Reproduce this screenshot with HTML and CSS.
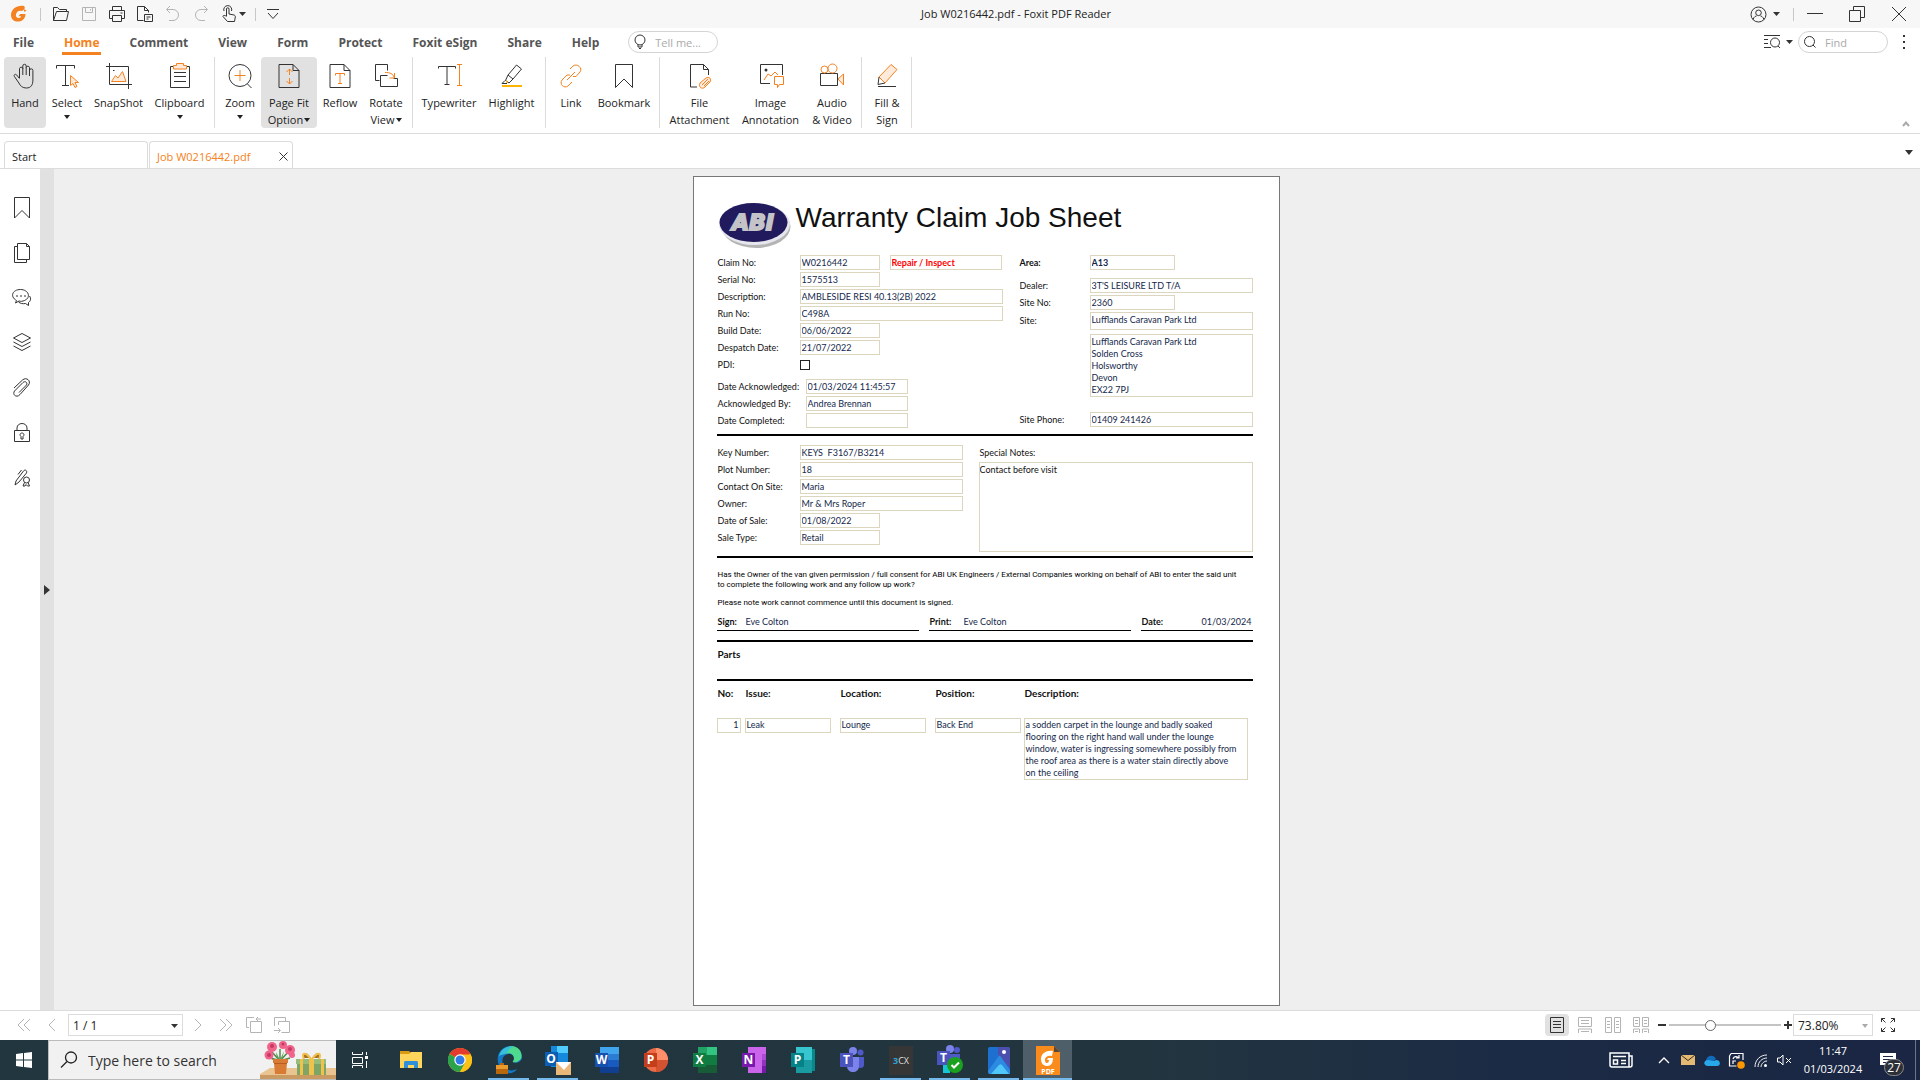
FILE: index.html
```html
<!DOCTYPE html>
<html lang="en">
<head>
  <meta charset="UTF-8">
  <meta name="viewport" content="width=device-width, initial-scale=1.0">
  <title>Job W0216442.pdf - Foxit PDF Reader</title>
  <link rel="stylesheet" href="styles.css">
</head>
<body>
  <!-- title bar -->
  <header class="titlebar">
    <div class="quick">
      <span class="slot app-logo"><svg width="18" height="18" viewBox="0 0 18 18"><path d="M14 1C7 0 1 4 1 10c0 5 4 7 8 6.500 4-.5 6.500-3.500 6.500-7.500H10L8.700 11.200h2.500c-.5 1.300-1.500 1.800-2.500 1.800C6.500 13 5.500 11 6 9c.7-3 4-4 6-3l2-1.500C15 3.500 15 2 14 1z" fill="#f58220" stroke="none"/><path d="M13.500 4l3 1.500-2 1.500z" fill="#f58220" stroke="none"/></svg></span>
      <span class="divider"></span>
      <button class="slot" aria-label="Open"><svg width="18" height="16" viewBox="0 0 18 16"><path d="M1.500 14.500v-13h4l2 2h7v2M1.500 14.500l3-9h12l-2 9z"/></svg></button>
      <button class="slot pale" aria-label="Save"><svg width="16" height="16" viewBox="0 0 16 16"><path d="M1.500 1.500h13v13h-13zM4.500 1.500v5h7v-5M9.500 3v1.500"/></svg></button>
      <button class="slot" aria-label="Print"><svg width="18" height="18" viewBox="0 0 18 18"><path d="M4.500 5V1.500h9V5M4.500 13.500h-3v-8h15v8h-3M4.500 10.500h9v6h-9zM12.500 8h2"/></svg></button>
      <button class="slot" aria-label="Export"><svg width="18" height="18" viewBox="0 0 18 18"><path d="M7.500 15.500h-6v-14h7l4 4v2M8.500 1.500v4h4M8.500 9.500h8v7h-8zM10.500 12h4M10.500 14h2"/></svg></button>
      <button class="slot pale" aria-label="Undo"><svg width="16" height="18" viewBox="0 0 16 18"><path d="M5 1L1.500 4.500 5 8M2 4.500h6a5.500 5.500 0 0 1 0 11H4"/></svg></button>
      <button class="slot pale" aria-label="Redo"><svg width="16" height="18" viewBox="0 0 16 18"><path d="M11 1l3.500 3.500L11 8M14 4.500H8a5.500 5.500 0 0 0 0 11h4"/></svg></button>
      <button class="slot touch" aria-label="Touch mode"><svg width="16" height="18" viewBox="0 0 16 18"><path d="M5.500 11V4a1.200 1.200 0 0 1 2.500 0v5l5 1c1 .3 1.500 1 1.300 2L13.500 16.500h-7L2 11.500c0-1.500 2-1.500 3.500 0M3 6a4 4 0 1 1 7.500 0"/></svg><svg width="7" height="5" viewBox="0 0 7 5"><path class="fill" d="M0 0h7L3.500 4z"/></svg></button>
      <span class="divider"></span>
      <button class="slot" aria-label="Customize"><svg width="14" height="12" viewBox="0 0 14 12"><path d="M1 1.500h12M2 5l5 5.500L12 5"/></svg></button>
    </div>
    <div class="window-title">Job W0216442.pdf - Foxit PDF Reader</div>
    <div class="window-tools">
      <button class="account" aria-label="Account"><svg width="17" height="17" viewBox="0 0 17 17"><circle cx="8.500" cy="8.500" r="7.500"/><circle cx="8.500" cy="6.800" r="2.800"/><path d="M3 13.500c1-3 3-3.500 3.500-3.500M14 13.500c-1-3-3-3.500-3.500-3.500"/></svg><svg width="7" height="5" viewBox="0 0 7 5"><path class="fill" d="M0 0h7L3.500 4z"/></svg></button>
      <span class="divider"></span>
      <button class="win-btn" aria-label="Minimize"><svg width="16" height="16" viewBox="0 0 16 16"><path d="M0 7.500h16"/></svg></button>
      <button class="win-btn" aria-label="Restore"><svg width="16" height="16" viewBox="0 0 16 16"><path d="M.5 4.500h11v11H.5zM4.500 4.500v-4h11v11h-4"/></svg></button>
      <button class="win-btn" aria-label="Close"><svg width="14" height="14" viewBox="0 0 14 14"><path d="M0 0l14 14M14 0L0 14"/></svg></button>
    </div>
  </header>

  <!-- menu -->
  <nav class="menubar">
    <div class="menus">
      <button>File</button>
      <button class="active">Home</button>
      <button>Comment</button>
      <button>View</button>
      <button>Form</button>
      <button>Protect</button>
      <button>Foxit eSign</button>
      <button>Share</button>
      <button>Help</button>
    </div>
    <label class="pill"><svg width="14" height="16" viewBox="0 0 14 16"><circle cx="7" cy="6" r="5"/><path d="M5 10.500v2.500h4v-2.500M6 14.500h2"/></svg><input type="text" placeholder="Tell me..." aria-label="Tell me"></label>
    <div class="menu-tools">
      <button class="account" aria-label="Search options"><svg width="17" height="16" viewBox="0 0 17 16"><path d="M0 1.500h16M0 5.500h4M0 9.500h4M0 13.500h7"/><circle cx="11" cy="8.500" r="4.500"/><path d="M14 12l2 2"/></svg><svg width="7" height="5" viewBox="0 0 7 5"><path class="fill" d="M0 0h7L3.500 4z"/></svg></button>
      <label class="pill"><svg width="14" height="14" viewBox="0 0 14 14"><circle cx="6.500" cy="6.500" r="5"/><path d="M10 10l2.500 2.500"/></svg><input type="text" placeholder="Find" aria-label="Find"></label>
      <button class="more" aria-label="More"><svg width="4" height="16" viewBox="0 0 4 16"><path class="fill" d="M1 1h2v2H1zM1 7h2v2H1zM1 13h2v2H1z"/></svg></button>
    </div>
  </nav>

  <!-- ribbon -->
  <div class="ribbon">
    <div class="group">
      <button class="tool tool-s on"><svg width="26" height="26" viewBox="0 0 26 26"><path d="M7.500 15V5.500a1.700 1.700 0 0 1 3.300 0V12M10.800 6V3a1.700 1.700 0 0 1 3.400 0v9M14.200 4.500a1.700 1.700 0 0 1 3.300 0V13M17.500 7.500a1.700 1.700 0 0 1 3.400 0V17c0 5-2 8-6.500 8-4 0-6-2-7.500-5l-4.500-6.500c-1-1.700 1-3 2.300-1.500l2.800 3.500"/></svg><span>Hand</span></button>
      <button class="tool tool-s"><svg width="26" height="26" viewBox="0 0 26 26"><path d="M2.500 5.500v-3h18v3M11.500 2.500v20M8 22.500h7"/><path class="tint" d="M16.500 12.500v10l2.500-2 2 4 2-1-2-4h3.500z"/></svg><span>Select</span><i class="caret"></i></button>
      <button class="tool tool-l"><svg width="26" height="26" viewBox="0 0 26 26"><path d="M3.500 0v21.500H26M0 3.500h22.500V26"/><path class="tint" d="M5.500 18.500l4-6 2.500 2.500 4.500-6.500 3.500 10z"/><path d="M7 7.500h1.500"/></svg><span>SnapShot</span></button>
      <button class="tool tool-l"><svg width="26" height="26" viewBox="0 0 26 26"><path d="M7 3.500H3.500v21h19v-21H19M7 9.500h12M7 13.500h12M7 18.500h12"/><path class="tint" d="M6.500 6V2.500h3V.5h7v2h3V6z"/></svg><span>Clipboard</span><i class="caret"></i></button>
    </div>
    <div class="group">
      <button class="tool tool-s"><svg width="26" height="26" viewBox="0 0 26 26"><circle cx="13" cy="12.500" r="11"/><path d="M20.500 21l4 4"/><path class="orange" d="M13 7v11M7.500 12.500h11"/></svg><span>Zoom</span><i class="caret"></i></button>
      <button class="tool tool-fit on"><svg width="26" height="26" viewBox="0 0 26 26"><path d="M3 1.500h14l6 6v17H3zM17 1.500v6h6"/><path class="orange" d="M13.500 6v6M10.500 9l3-3 3 3M13.500 15v6M10.500 18l3 3 3-3"/></svg><span>Page Fit<br>Option<i class="caret"></i></span></button>
      <button class="tool tool-m"><svg width="26" height="26" viewBox="0 0 26 26"><path d="M3 1.500h14l6 6v17H3zM17 1.500v6h6"/><path class="orange" d="M8.500 12.500v-2h9v2M13 10.500v10M11 20.500h4"/></svg><span>Reflow</span></button>
      <button class="tool tool-m"><svg width="26" height="26" viewBox="0 0 26 26"><path d="M6.500 17.500h-4v-16h12v6M14.500 12.500h-7v11h17v-8h-4"/><path class="orange" d="M12 9.500c5 0 8 1 9 5M21.500 10v5h-5"/></svg><span>Rotate<br>View<i class="caret"></i></span></button>
    </div>
    <div class="group">
      <button class="tool tool-xl"><svg width="26" height="26" viewBox="0 0 26 26"><path d="M2.500 5.500v-2h17v2M11 3.500v18M8.500 21.500h5"/><path class="orange" d="M21 1.500h5M21 22.500h5M23.500 1.500v21"/></svg><span>Typewriter</span></button>
      <button class="tool tool-l"><svg width="26" height="26" viewBox="0 0 26 26"><path d="M9 12l8.500-10 5 4L14 16zM9 12l-2.500 5.500L10 20l4-4M6 17.500l-3 3h5"/><path fill="#ffb400" stroke="none" d="M3 22h20v2H3zM7 17l2 2-2 1z"/></svg><span>Highlight</span></button>
    </div>
    <div class="group">
      <button class="tool tool-s"><svg width="26" height="26" viewBox="0 0 26 26"><path class="orange" d="M9 17l8-8M12 6l3-3c4-3 10 2 7 6l-4 4.500h-3M14 19l-4 4c-4 3-9-2-6-6l5-5h3"/></svg><span>Link</span></button>
      <button class="tool tool-xl"><svg width="26" height="26" viewBox="0 0 26 26"><path d="M4.500 1.500h17v23L13 16l-8.500 8.500z"/></svg><span>Bookmark</span></button>
    </div>
    <div class="group">
      <button class="tool tool-xxl"><svg width="26" height="26" viewBox="0 0 26 26"><path d="M10 24H3.500V1.500h13l5 5V12M16.500 1.500v5h5"/><path class="tint" d="M13 20l6-5c3-2 6 1 4 4l-5 5c-3 3-7 0-5-4z"/><path class="orange" d="M15 22l6-6M17 23l5-5"/></svg><span>File<br>Attachment</span></button>
      <button class="tool tool-xxl"><svg width="26" height="26" viewBox="0 0 26 26"><path d="M12 20.500H2.500v-19h22V12"/><circle class="fill" cx="8" cy="7" r="1.500"/><path class="orange" d="M6 17l4-6 3 2 4-4 3 3M16.500 13.500h9v8h-4l-2 3v-3h-3z"/></svg><span>Image<br>Annotation</span></button>
      <button class="tool tool-av"><svg width="26" height="26" viewBox="0 0 26 26"><path d="M1.500 10.500h17v12h-17z"/><circle class="orange" cx="5.500" cy="6.500" r="3.500"/><circle class="orange" cx="13.500" cy="5.500" r="4.500"/><path class="tint" d="M19 16l5.500-5v11z"/></svg><span>Audio<br>&amp; Video</span></button>
    </div>
    <div class="group">
      <button class="tool tool-s"><svg width="26" height="26" viewBox="0 0 26 26"><path class="tint" d="M5 14L17 1.500l6 5L11 20z"/><path d="M5 14l-1 7.500L11 20M4 23.500h18"/></svg><span>Fill &amp;<br>Sign</span></button>
    </div>
    <button class="collapse" aria-label="Collapse ribbon"><svg width="8" height="6" viewBox="0 0 8 6"><path d="M1 5l3-3.500L7 5"/></svg></button>
  </div>

  <!-- document tabs -->
  <div class="tabs">
    <button class="tab">Start</button>
    <div class="tab current"><span>Job W0216442.pdf</span><button aria-label="Close tab"><svg width="9" height="9" viewBox="0 0 9 9"><path d="M.5.5l8 8M8.500.5l-8 8"/></svg></button></div>
    <button class="tab-list" aria-label="Tab list"><svg width="8" height="5" viewBox="0 0 8 5"><path class="fill" d="M0 0h8L4 5z"/></svg></button>
  </div>

  <div class="workspace">
    <aside class="side">
      <button aria-label="Bookmarks"><svg width="20" height="22" viewBox="0 0 20 22"><path d="M2.500.5h15v20.500L10 13.500 2.500 21z"/></svg></button>
      <button aria-label="Pages"><svg width="20" height="22" viewBox="0 0 20 22"><path d="M5 4.500H2.500v16h12V18M5.500 1.500h9l3 3v13h-12zM14.500 1.500v3h3"/></svg></button>
      <button aria-label="Comments"><svg width="20" height="22" viewBox="0 0 20 22"><path d="M4.500 13.500c-7-4-4-11 4-11s11 8 4 11c-2 1-4 1-5.500.5L3.500 16zM17.500 9c2 3 1 5-1 6.500v3l-3-2c-3 .5-5 0-7-1.500"/><path d="M4 9h2M8 9h2M12 9h2"/></svg></button>
      <button aria-label="Layers"><svg width="20" height="22" viewBox="0 0 20 22"><path d="M10 1.500l8.500 4.500-8.500 4.500L1.500 6zM1.500 10l8.500 4.500L18.500 10M1.500 14l8.500 4.500L18.500 14"/></svg></button>
      <button aria-label="Attachments"><svg width="20" height="22" viewBox="0 0 20 22"><path d="M2 11l8.500-8c4-3.500 9 1 6 5L8 17.500c-3.500 4-8 0-5.500-3.500L11 5.500c2-2 5 0 3.500 2.500L7 15.500"/></svg></button>
      <button aria-label="Security"><svg width="20" height="22" viewBox="0 0 20 22"><path d="M2.500 8.500h15v11h-15zM5 8.500V6c0-6 10-6 10 0v2.500M9 17v-2.500c-2-2-.5-3.500 1-3.500s3 1.500 1 3.500V17z"/></svg></button>
      <button aria-label="Signatures"><svg width="20" height="22" viewBox="0 0 20 22"><path d="M3 18l1-4L11.500 4c1.500-2 4-.5 3 2L7 15l-4 3zM6 7.500L9.500 3"/><circle cx="14.500" cy="13" r="3"/><path d="M12.500 15.500L11 19h2l1-1.500 1.500 1.500h2l-1.500-3.500"/></svg></button>
    </aside>
    <button class="expander" aria-label="Expand panel"><svg width="6" height="10" viewBox="0 0 6 10"><path class="fill" d="M0 0l6 5-6 5z"/></svg></button>

    <main class="viewer">
      <form class="paper">
        <div class="sheet-head">
          <svg class="abi" width="74" height="48" viewBox="0 0 74 48"><g stroke="none"><ellipse cx="38" cy="23.500" rx="34.500" ry="21.500" fill="#b4b4b4"/><ellipse cx="36.500" cy="21" rx="35.500" ry="21" fill="#e6e6ee"/><ellipse cx="35.500" cy="19.500" rx="34" ry="19.500" fill="#211a5c"/></g><text x="35" y="27" text-anchor="middle" font-family="DejaVu Sans, sans-serif" font-size="22" font-weight="700" font-style="italic" fill="#c3c3c8" stroke="#c3c3c8" stroke-width="2">ABI</text></svg>
          <h1>Warranty Claim Job Sheet</h1>
        </div>

        <section class="claim">
          <div class="col-left">
            <div class="row"><label for="claim">Claim No:</label><input class="short" id="claim" type="text" value="W0216442"><input class="kind" type="text" aria-label="Job type" value="Repair / Inspect"></div>
            <div class="row"><label for="serial">Serial No:</label><input class="short" id="serial" type="text" value="1575513"></div>
            <div class="row"><label for="desc">Description:</label><input class="full" id="desc" type="text" value="AMBLESIDE RESI 40.13(2B) 2022"></div>
            <div class="row"><label for="run">Run No:</label><input class="full" id="run" type="text" value="C498A"></div>
            <div class="row"><label for="build">Build Date:</label><input class="short" id="build" type="text" value="06/06/2022"></div>
            <div class="row"><label for="despatch">Despatch Date:</label><input class="short" id="despatch" type="text" value="21/07/2022"></div>
            <div class="row"><label for="pdi">PDI:</label><input id="pdi" type="checkbox"></div>
            <div class="row ack first"><label for="ackdate">Date Acknowledged:</label><input id="ackdate" type="text" value="01/03/2024 11:45:57"></div>
            <div class="row ack"><label for="ackby">Acknowledged By:</label><input id="ackby" type="text" value="Andrea Brennan"></div>
            <div class="row ack"><label for="completed">Date Completed:</label><input id="completed" type="text" value=""></div>
          </div>
          <div class="col-right">
            <div class="row area"><label for="area">Area:</label><input class="short" id="area" type="text" value="A13"></div>
            <div class="row"><label for="dealer">Dealer:</label><input id="dealer" type="text" value="3T'S LEISURE LTD T/A"></div>
            <div class="row"><label for="siteno">Site No:</label><input class="short" id="siteno" type="text" value="2360"></div>
            <div class="row site"><label for="site">Site:</label><input id="site" type="text" value="Lufflands Caravan Park Ltd"></div>
            <div class="row address"><textarea aria-label="Site address">Lufflands Caravan Park Ltd
Solden Cross
Holsworthy
Devon
EX22 7PJ</textarea></div>
            <div class="row phone"><label for="phone">Site Phone:</label><input id="phone" type="text" value="01409 241426"></div>
          </div>
        </section>

        <section class="contact">
          <div class="col-contact">
            <div class="row"><label for="key">Key Number:</label><input id="key" type="text" value="KEYS  F3167/B3214"></div>
            <div class="row"><label for="plot">Plot Number:</label><input id="plot" type="text" value="18"></div>
            <div class="row"><label for="onsite">Contact On Site:</label><input id="onsite" type="text" value="Maria"></div>
            <div class="row"><label for="owner">Owner:</label><input id="owner" type="text" value="Mr &amp; Mrs Roper"></div>
            <div class="row"><label for="sale">Date of Sale:</label><input class="short" id="sale" type="text" value="01/08/2022"></div>
            <div class="row"><label for="saletype">Sale Type:</label><input class="short" id="saletype" type="text" value="Retail"></div>
          </div>
          <div class="notes">
            <label for="notes">Special Notes:</label>
            <textarea id="notes">Contact before visit</textarea>
          </div>
        </section>

        <section class="consent">
          <p>Has the Owner of the van given permission / full consent for ABI UK Engineers / External Companies working on behalf of ABI to enter the said unit<br>to complete the following work and any follow up work?</p>
          <p>Please note work cannot commence until this document is signed.</p>
          <div class="signatures">
            <div class="sign"><label for="sign">Sign:</label><input id="sign" type="text" value="Eve Colton"></div>
            <div class="sign print"><label for="print">Print:</label><input id="print" type="text" value="Eve Colton"></div>
            <div class="sign date"><label for="date">Date:</label><input id="date" type="text" value="01/03/2024"></div>
          </div>
        </section>

        <section class="parts"><h2>Parts</h2></section>

        <section class="issues">
          <table>
            <colgroup><col class="c-no"><col class="c-issue"><col class="c-issue"><col class="c-pos"><col></colgroup>
            <thead><tr><th>No:</th><th>Issue:</th><th>Location:</th><th>Position:</th><th>Description:</th></tr></thead>
            <tbody><tr>
              <td><div class="box num">1</div></td>
              <td><div class="box">Leak</div></td>
              <td><div class="box">Lounge</div></td>
              <td><div class="box">Back End</div></td>
              <td><div class="box long">a sodden carpet in the lounge and badly soaked<br>flooring on the right hand wall under the lounge<br>window, water is ingressing somewhere possibly from<br>the roof area as there is a water stain directly above<br>on the ceiling</div></td>
            </tr></tbody>
          </table>
        </section>
      </form>
    </main>
  </div>

  <!-- status bar -->
  <footer class="status">
    <div class="pager">
      <button aria-label="First page"><svg width="14" height="14" viewBox="0 0 14 14"><path d="M7 1L1 7l6 6M13 1L7 7l6 6"/></svg></button>
      <button aria-label="Previous page"><svg width="14" height="14" viewBox="0 0 14 14"><path d="M10 1L4 7l6 6"/></svg></button>
      <span class="pick page"><select aria-label="Page"><option>1 / 1</option></select><svg width="7" height="5" viewBox="0 0 7 5"><path class="fill" d="M0 0h7L3.500 4z"/></svg></span>
      <button aria-label="Next page"><svg width="14" height="14" viewBox="0 0 14 14"><path d="M4 1l6 6-6 6"/></svg></button>
      <button aria-label="Last page"><svg width="14" height="14" viewBox="0 0 14 14"><path d="M1 1l6 6-6 6M7 1l6 6-6 6"/></svg></button>
      <button aria-label="Previous view"><svg width="18" height="18" viewBox="0 0 18 18"><path d="M4 11.500H1.500v-10H9M5.500 5.500h11v11h-11zM16 3h-5M13 1l-2 2 2 2"/></svg></button>
      <button aria-label="Next view"><svg width="18" height="18" viewBox="0 0 18 18"><path d="M1.500 10V1.500h11v4M9 5.500h7.500v11h-8M5.500 9V5.500H9M1 14.500h6M5 12l2.500 2.500L5 17"/></svg></button>
    </div>
    <div class="view-tools">
      <button class="on" aria-label="Single page"><svg width="14" height="16" viewBox="0 0 14 16"><path d="M.5.5h13v15H.5zM3 4.500h8M3 7.500h8M3 10.500h8"/></svg></button>
      <button aria-label="Continuous"><svg width="14" height="16" viewBox="0 0 14 16"><path d="M.5.5h13v9H.5zM3 3.500h8M3 6.500h8M.5 16v-4h13v4M3 14.500h8"/></svg></button>
      <button aria-label="Facing"><svg width="16" height="16" viewBox="0 0 16 16"><path d="M.5.5h6v15h-6zM9.500.5h6v15h-6zM2 4.500h3M2 7.500h3M2 10.500h3M11 4.500h3M11 7.500h3M11 10.500h3"/></svg></button>
      <button aria-label="Continuous facing"><svg width="16" height="16" viewBox="0 0 16 16"><path d="M.5.5h6v9h-6zM9.500.5h6v9h-6zM2 3.500h3M2 6.500h3M11 3.500h3M11 6.500h3M.5 16v-4h6v4M9.500 16v-4h6v4M2 14.500h3M11 14.500h3"/></svg></button>
      <button class="step" aria-label="Zoom out"><svg width="8" height="8" viewBox="0 0 8 8"><path class="fill" d="M0 3h8v2H0z"/></svg></button>
      <input type="range" min="0" max="100" value="36" aria-label="Zoom level">
      <button class="step" aria-label="Zoom in"><svg width="8" height="8" viewBox="0 0 8 8"><path class="fill" d="M0 3h8v2H0zM3 0h2v8H3z"/></svg></button>
      <span class="pick zoom"><select aria-label="Zoom"><option>73.80%</option></select><svg width="6" height="4" viewBox="0 0 6 4"><path fill="#aaa" stroke="none" d="M0 0h6L3 4z"/></svg></span>
      <button aria-label="Full screen"><svg width="16" height="16" viewBox="0 0 16 16"><path class="dark" d="M1.500 5V1.500H5M1.500 1.500l4 4M11 1.500h3.500V5M14.500 1.500l-4 4M1.500 11v3.500H5M1.500 14.500l4-4M11 14.500h3.500V11M14.500 14.500l-4-4"/></svg></button>
    </div>
  </footer>

  <!-- taskbar -->
  <div class="taskbar">
    <button class="start" aria-label="Start"><svg width="16" height="16" viewBox="0 0 16 16"><path fill="#fff" stroke="none" d="M0 2l7-1v6.500H0zM8 1l8-1v7.500H8zM0 8.500h7V15l-7-1zM8 8.500h8V16l-8-1z"/></svg></button>
    <label class="search">
      <svg width="18" height="18" viewBox="0 0 18 18"><circle cx="11" cy="6.500" r="5.500" stroke="#222" stroke-width="1.300"/><path stroke="#222" stroke-width="1.300" d="M7 10.500L1 16.500"/></svg>
      <input type="text" placeholder="Type here to search" aria-label="Type here to search">
      <svg class="art" width="76" height="38" viewBox="0 0 76 38">
        <path fill="#e9c490" stroke="none" d="M10 27h66v11H0v-5z"/><path fill="#c99a62" stroke="none" d="M0 34h76v4H0z"/>
        <path stroke="#4f8a4a" stroke-width="1.500" d="M20 20L12 11M20 20l-9-3M20 20V8M20 20l9-10M20 20l10-3"/>
        <path fill="#5f9c57" stroke="none" d="M16 11l4 8 4-9-2 9 6-2-7 5h-4l-6-4 6 1z"/>
        <g fill="#f0648c" stroke="none"><circle cx="12" cy="6" r="5"/><circle cx="23" cy="4" r="4"/><circle cx="30" cy="9" r="5"/><circle cx="9" cy="14" r="4.500"/><circle cx="32" cy="14" r="3"/></g>
        <g fill="#c93863" stroke="none"><circle cx="12" cy="5" r="2"/><circle cx="23" cy="3" r="1.500"/><circle cx="30" cy="8" r="2"/><circle cx="9" cy="14" r="2"/></g>
        <path fill="#d97a35" stroke="none" d="M13 18h15v4h-1l-1 11H15l-1-11h-1z"/><path fill="#b95c20" stroke="none" d="M14 22h13v1H14z"/>
        <path fill="#7fa566" stroke="none" d="M37 21h29v13H37z"/><path fill="#97bd7c" stroke="none" d="M36 18h30v5H36z"/><path fill="#f0c24c" stroke="none" d="M40 18h3v16h-3zM49 18h5v16h-5zM61 18h3v16h-3z"/><path fill="#a8702a" stroke="none" d="M51 17c-5-8-9-5-7 0zM52 17c5-8 9-5 7 0z"/><path stroke="#f0c24c" stroke-width="2" d="M51 18c-6-8-10-6-7 0M52 18c6-8 10-6 7 0"/>
      </svg>
    </label>
    <div class="apps">
      <button class="task-view" aria-label="Task view"><svg width="16" height="16" viewBox="0 0 16 16"><path stroke="#fff" d="M.5 0v2.500h10V0M.5 5.500h10v6H.5zM.5 16v-2.500h10V16M14.500 0v3M14.500 9v7"/><path fill="#fff" stroke="none" d="M13 4h3v3h-3z"/></svg></button>
      <button aria-label="File Explorer"><svg width="22" height="20" viewBox="0 0 22 20"><path fill="#d99a16" stroke="none" d="M0 1h9l2 2v4H0z"/><path fill="#ffd55c" stroke="none" d="M0 4h9l2-2h11v16H0z"/><path fill="#2f8fd8" stroke="none" d="M4 18v-5c0-2 1-2 2-2h10c1 0 2 0 2 2v5h-4v-3H8v3z"/></svg></button>
      <button aria-label="Chrome"><svg width="24" height="24" viewBox="0 0 24 24"><g stroke="none"><circle cx="12" cy="12" r="12" fill="#fbc116"/><path fill="#e33b2e" d="M12 12L1.600 6A12 12 0 0 1 22.400 6z"/><path fill="#2ba24c" d="M12 12L1.600 6A12 12 0 0 0 12 24l5-9z"/><path fill="#fbc116" d="M12 6.500h10.700A12 12 0 0 1 12 24l5-9z"/><circle cx="12" cy="12" r="5.700" fill="#fff"/><circle cx="12" cy="12" r="4.500" fill="#2f7bea"/></g></svg></button>
      <button class="running" aria-label="Edge"><svg width="26" height="28" viewBox="0 0 26 28"><g stroke="none"><path fill="#1478c4" d="M2 16C0 6 8 0 14 0c8 0 12 6 12 11s-6 7-9 5c3-4 0-8-4-8-5 0-8 5-6 10 2 6 8 8 14 5-3 6-17 7-19-7z"/><path fill="#4fdb8d" d="M15 0c8 0 11 6 10.500 11-.5 4-5.500 6-9 5 4-5-1-11-7-8 0 0 0-7 5.500-8z"/><path fill="#36c0dc" d="M3 10C5 2 12-1 18 1c-5 0-5 5-9 7-3 1-5 1-6 2z"/><path fill="#b9670d" d="M0 19h12v9H0zM4 17h4v2H4z"/><path fill="#eb9a2d" d="M0 19h12v4H0z"/></g></svg></button>
      <button class="running" aria-label="Outlook"><svg width="26" height="30" viewBox="0 0 26 30"><g stroke="none"><path fill="#1689dd" d="M6 1h17v21H6z"/><path fill="#52ccff" d="M12 1h11v7H12z"/><path fill="#0c5eb3" d="M0 7h13v14H0z"/><path fill="#e9b777" d="M11 17h15v13H11z"/><path fill="#fff" d="M11 17h15l-7 8z"/></g><text x="6" y="18" class="letter">O</text></svg></button>
      <button aria-label="Word"><svg width="24" height="26" viewBox="0 0 24 26"><g stroke="none"><path fill="#41a5ee" d="M5 0h19v7H5z"/><path fill="#2b7cd3" d="M5 7h19v6H5z"/><path fill="#185abd" d="M5 13h19v7H5z"/><path fill="#103f91" d="M5 20h19v6H5z"/><path fill="#1751b0" d="M0 6h13v14H0z"/></g><text x="6.500" y="17" class="letter">W</text></svg></button>
      <button aria-label="PowerPoint"><svg width="24" height="26" viewBox="0 0 24 26"><g stroke="none"><circle cx="12" cy="13" r="12" fill="#ed6c47"/><path fill="#ff8f6b" d="M12 1a12 12 0 0 1 12 12H12z"/><path fill="#d35230" d="M12 25a12 12 0 0 0 12-12H12z"/><path fill="#c43e1c" d="M0 6h13v14H0z"/></g><text x="6.500" y="17" class="letter">P</text></svg></button>
      <button aria-label="Excel"><svg width="24" height="26" viewBox="0 0 24 26"><g stroke="none"><path fill="#21a366" d="M5 0h10v8H5z"/><path fill="#33c481" d="M14 0h10v8H14z"/><path fill="#107c41" d="M5 8h19v10H5z"/><path fill="#185c37" d="M5 18h19v8H5z"/><path fill="#107c41" d="M0 6h13v14H0z"/></g><text x="6.500" y="17" class="letter">X</text></svg></button>
      <button aria-label="OneNote"><svg width="24" height="26" viewBox="0 0 24 26"><g stroke="none"><path fill="#ca64ea" d="M6 0h18v26H6z"/><path fill="#ae4bd5" d="M20 7h4v6h-4z"/><path fill="#9332bf" d="M20 13h4v6h-4z"/><path fill="#7719aa" d="M20 19h4v7h-4zM0 6h13v14H0z"/></g><text x="6.500" y="17" class="letter">N</text></svg></button>
      <button aria-label="Publisher"><svg width="24" height="26" viewBox="0 0 24 26"><g stroke="none"><path fill="#058a8b" d="M12 2h12v22H12z"/><path fill="#37c6d0" d="M5 0h16v13H5z"/><path fill="#1a9ba1" d="M5 13h16v13H5z"/><path fill="#038387" d="M0 6h13v14H0z"/></g><text x="6.500" y="17" class="letter">P</text></svg></button>
      <button aria-label="Teams classic"><svg width="24" height="26" viewBox="0 0 24 26"><g stroke="none"><circle cx="20.500" cy="5.500" r="3" fill="#5059c9"/><circle cx="13" cy="4" r="4" fill="#7b83eb"/><path fill="#5059c9" d="M15 10h9v8c0 3-4 4-6 2z"/><path fill="#7b83eb" d="M7 10h12v9c0 8-12 8-12 0z"/><path fill="#4b53bc" d="M0 6h13v14H0z"/></g><text x="6.500" y="17" class="letter">T</text></svg></button>
      <button class="running" aria-label="3CX"><svg width="24" height="29" viewBox="0 0 24 29"><path fill="#363636" stroke="none" d="M0 0h24v29H0z"/><text x="12" y="18" text-anchor="middle" font-family="Open Sans, sans-serif" font-size="9" fill="#ddd" stroke="none"><tspan fill="#2ba3dd" font-weight="700">3</tspan>CX</text></svg></button>
      <button class="running" aria-label="Teams"><svg width="26" height="30" viewBox="0 0 26 30"><g stroke="none"><circle cx="20" cy="5" r="3" fill="#5059c9"/><circle cx="13" cy="4" r="4" fill="#7b83eb"/><path fill="#5059c9" d="M7 9h16v14H7z"/><path fill="#16c6d4" d="M6 19h7v9H6z"/><path fill="#4b53bc" d="M0 6h13v14H0z"/><circle cx="18" cy="20" r="8" fill="#1ba11f"/></g><text x="6.500" y="17" class="letter">T</text><path stroke="#fff" stroke-width="2" d="M14.500 20l2.500 2.500 5-5"/></svg></button>
      <button class="running" aria-label="Photos"><svg width="22" height="27" viewBox="0 0 22 27"><g stroke="none"><rect width="22" height="27" rx="2" fill="#1d6fd0"/><path fill="#4d4fae" d="M10 0h10c1 0 2 1 2 2v19L10 8z"/><path fill="#2c8ae0" d="M0 24L10 10c1-2 2-2 3 0l9 13v4H2c-1 0-2-1-2-3z"/><path fill="#51c6f8" d="M3 27l8-9c1-1 2-1 3 0l7 9z"/><circle cx="16" cy="5" r="2" fill="#fff"/></g></svg></button>
      <button class="running focused" aria-label="Foxit PDF Reader"><svg width="24" height="29" viewBox="0 0 24 29"><path fill="#fa8b1d" stroke="none" d="M0 0h18l6 6v23H0z"/><path fill="#5b4638" stroke="none" d="M18 0l6 6h-6z"/><path fill="#fff" stroke="none" d="M17 5C11 4 5 7 5 13c0 5 3 7 6 7 4 0 6-3 6-8h-5l-1 2h2c0 2-1 3-2 3-2 0-2-2-2-4 1-3 4-4 7-3z"/><text x="12" y="28" text-anchor="middle" font-family="Open Sans, sans-serif" font-size="7" font-weight="700" fill="#fff" stroke="none">PDF</text></svg></button>
    </div>
    <div class="tray">
      <button class="news" aria-label="News"><svg width="24" height="17" viewBox="0 0 24 17"><path stroke="#fff" stroke-width="1.500" d="M1 1h19v14H3c-1 0-2-1-2-2zM20 4h3v9c0 1-1 2-2 2h-2M4 4.500h13M12 8.500h5M12 11.500h5M4.500 8h4v4h-4z"/></svg></button>
      <button aria-label="Hidden icons"><svg width="12" height="8" viewBox="0 0 12 8"><path stroke="#fff" stroke-width="1.300" d="M1 7l5-5 5 5"/></svg></button>
      <button aria-label="Mail"><svg width="14" height="10" viewBox="0 0 14 10"><path fill="#e5b873" stroke="none" d="M0 0h14v10H0z"/><path stroke="#3b3020" d="M0 0l7 5.500L14 0"/></svg></button>
      <button aria-label="OneDrive"><svg width="16" height="11" viewBox="0 0 16 11"><g stroke="none"><path fill="#0f6cbd" d="M2 6C2 1 9-2 12 4l-5 4z"/><path fill="#28a8ea" d="M4 11c-5 0-5-6 0-6 3 0 5 2 8 0 5 0 5 6 1 6z"/></g></svg></button>
      <button aria-label="Update"><svg width="17" height="17" viewBox="0 0 17 17"><path stroke="#fff" stroke-width="1.200" d="M3 1.500h12V8M1.500 4v10h7M3 1.500L1.500 4M5 7c1-3 4-3 6-1M11 3v3H8M5 12V9h3"/><circle cx="13" cy="13" r="3.800" fill="#ff9800" stroke="none"/></svg></button>
      <button aria-label="Network"><svg width="13" height="13" viewBox="0 0 13 13"><path stroke="#eee" d="M1 13C1 6 6 1 13 1M4 13c0-5 4-9 9-9M7 13c0-3 3-6 6-6"/><circle cx="11.500" cy="11.500" r="1.500" fill="#fff" stroke="none"/></svg></button>
      <button aria-label="Volume"><svg width="15" height="12" viewBox="0 0 15 12"><path stroke="#fff" d="M.5 4H3l3-3v10L3 8H.5zM9 4l5 5M14 4L9 9"/></svg></button>
      <div class="clock"><span>11:47</span><span>01/03/2024</span></div>
      <button class="alerts" aria-label="Notifications"><svg width="16" height="15" viewBox="0 0 16 15"><path fill="#fff" stroke="none" d="M0 0h16v12h-8l-3 3v-3H0z"/><path stroke="#1b2845" d="M3 3.500h10M3 6.500h10M3 9.500h6"/></svg><span class="badge">27</span></button>
      <span class="peek"></span>
    </div>
  </div>
</body>
</html>
```

FILE: styles.css
```css
* {
  box-sizing: border-box;
}
body {
  margin: 0;
  height: 100vh;
  display: flex;
  flex-direction: column;
  overflow: hidden;
  background: #fff;
  color: #222;
  font-family: "Open Sans", "Noto Sans", sans-serif;
  font-size: 11px;
}
button {
  display: flex;
  align-items: center;
  justify-content: center;
  margin: 0;
  padding: 0;
  border: 0;
  background: none;
  color: inherit;
  font: inherit;
}
input, textarea, select {
  margin: 0;
  padding: 0;
  border: 0;
  outline: none;
  background: none;
  color: inherit;
  font: inherit;
  min-width: 0;
  border-radius: 0;
}
svg {
  flex: none;
  fill: none;
  stroke: #333;
}
.fill {
  fill: #333;
  stroke: none;
}
.orange {
  stroke: #f58220;
}
.tint {
  stroke: #f58220;
  fill: #fdeadb;
}
.divider {
  width: 1px;
  height: 13px;
  background: #c8c8c8;
}

/* title bar */
.titlebar {
  flex: none;
  display: flex;
  align-items: center;
  height: 28px;
  background: #f7f7f7;
}
.quick {
  display: flex;
  align-items: center;
  padding-left: 5px;
}
.slot {
  width: 28px;
  height: 28px;
}
.app-logo {
  display: flex;
  align-items: center;
  justify-content: center;
}
.app-logo + .divider {
  margin: 0 6px 0 7px;
}
.pale svg {
  stroke: #b4b4b4;
}
.touch {
  width: 36px;
  gap: 2px;
}
.touch + .divider {
  margin: 0 3px 0 4px;
}
.window-title {
  flex: 1;
  padding-bottom: 2px;
  text-align: center;
}
.window-tools {
  display: flex;
  align-items: center;
}
.account {
  gap: 6px;
  padding: 0 13px 0 5px;
}
.win-btn {
  width: 42px;
  height: 28px;
}

/* menu bar */
.menubar {
  flex: none;
  display: flex;
  align-items: center;
  height: 28px;
}
.menus {
  display: flex;
  gap: 26px;
  padding-left: 11px;
  margin-right: 27px;
}
.menus button {
  height: 25px;
  padding: 3px 2px 0;
  font-size: 12px;
  font-weight: 700;
  color: #555;
  border-bottom: 3px solid transparent;
}
.menus .active {
  color: #f58220;
  border-bottom-color: #f58220;
}
.pill {
  display: flex;
  align-items: center;
  width: 90px;
  height: 22px;
  padding-left: 4px;
  border: 1px solid #d4d4d4;
  border-radius: 11px;
}
.pill input {
  width: 60px;
  margin-left: 8px;
}
.pill input::placeholder {
  color: #aaa;
}
.menu-tools {
  display: flex;
  align-items: center;
  margin-left: auto;
}
.menu-tools .account {
  gap: 5px;
  padding: 0 5px;
}
.more {
  width: 32px;
}

/* ribbon */
.ribbon {
  flex: none;
  display: flex;
  height: 78px;
  border-bottom: 1px solid #dcdcdc;
}
.group {
  display: flex;
  height: 71px;
  margin-top: 1px;
  padding: 0 4px;
  border-right: 1px solid #dcdcdc;
}
.group + .group {
  padding-right: 3px;
}
.tool {
  flex-direction: column;
  justify-content: flex-start;
  height: 71px;
  padding-top: 6px;
  line-height: 17px;
  border-radius: 4px;
}
.tool svg {
  margin-bottom: 5px;
}
.tool-s {
  width: 42px;
}
.tool-m {
  width: 46px;
}
.tool-av {
  width: 52px;
}
.tool-fit {
  width: 56px;
}
.tool-l {
  width: 61px;
}
.tool-xl {
  width: 64px;
}
.tool-xxl {
  width: 71px;
}
.tool.on {
  background: #e1e1e1;
}
.caret {
  display: inline-block;
  border: 3px solid transparent;
  border-top: 4px solid #222;
  border-bottom: 0;
}
.tool > .caret {
  margin-top: 4px;
}
.tool span .caret {
  margin-left: 1px;
  vertical-align: 2px;
}
.collapse {
  align-self: flex-end;
  margin: 0 10px 6px auto;
}
.collapse svg {
  stroke: #aaa;
  stroke-width: 2;
}

/* document tabs */
.tabs {
  flex: none;
  display: flex;
  align-items: flex-end;
  gap: 1px;
  height: 35px;
  padding-left: 4px;
  border-bottom: 1px solid #dcdcdc;
}
.tab {
  display: flex;
  align-items: center;
  justify-content: flex-start;
  width: 144px;
  height: 27px;
  padding: 2px 4px 0 7px;
  border: 1px solid #dcdcdc;
  border-bottom: 0;
  border-radius: 4px 4px 0 0;
}
.tab.current {
  justify-content: space-between;
  color: #f58220;
}
.tab-list {
  margin: 0 7px 13px auto;
}

/* workspace */
.workspace {
  flex: 1;
  display: flex;
  min-height: 0;
}
.side {
  width: 40px;
  padding-top: 16px;
}
.side button {
  width: 43px;
  height: 45px;
}
.expander {
  width: 14px;
  background: #e1e1e1;
}
.viewer {
  flex: 1;
  display: flex;
  justify-content: center;
  align-items: flex-start;
  padding: 7px 2px 0 0;
  overflow: hidden;
  background: #efefef;
}
.paper {
  width: 587px;
  min-height: 830px;
  padding: 23px 26px 0 23px;
  border: 1px solid #777;
  background: #fff;
  color: #111;
  font-family: Lato, "Open Sans", sans-serif;
  font-size: 9px;
  line-height: 12px;
}

/* job sheet */
.sheet-head {
  display: flex;
  align-items: flex-start;
  height: 55px;
}
.abi {
  margin: 3px 4px 0 1px;
}
.paper h1 {
  margin: 0;
  font: 400 28px/36px "Liberation Sans", Arial, sans-serif;
}
.paper h2 {
  margin: 0;
  font-size: 10px;
}
.paper input[type="text"], .paper textarea, .box {
  height: 15px;
  padding: 0 1px;
  border: 1px solid #dcd6bf;
  color: #14284b;
}
.paper textarea {
  resize: none;
  overflow: hidden;
}
.claim {
  display: flex;
  justify-content: space-between;
  height: 181px;
  border-bottom: 2px solid #000;
}
.col-left {
  width: 286px;
}
.col-right {
  width: 234px;
}
.col-contact {
  width: 246px;
}
.row {
  display: flex;
  align-items: center;
  margin-bottom: 2px;
  height: 15px;
}
.row label {
  flex: none;
  width: 83px;
  padding-left: 1px;
}
.row input[type="text"], .row textarea {
  flex: 1;
}
.paper .row input.short {
  flex: none;
  width: 80px;
}
.paper .row input.kind {
  flex: none;
  width: 112px;
  margin-left: 10px;
  color: #f00;
  font-weight: 700;
}
.row input[type="checkbox"] {
  appearance: none;
  width: 10px;
  height: 10px;
  border: 1px solid #222;
}
.ack label {
  width: 89px;
}
.paper .row.ack input {
  flex: none;
  width: 102px;
}
.ack.first {
  margin-top: 7px;
}
.col-right .row label {
  width: 71px;
}
.paper .col-right .row input.short {
  width: 85px;
}
.row.area {
  margin-bottom: 8px;
  font-weight: 700;
}
.row.site {
  height: 18px;
  margin-bottom: 4px;
}
.paper .row.site input {
  height: 18px;
  padding-bottom: 4px;
}
.row.address {
  height: 63px;
  margin-bottom: 15px;
  padding-left: 71px;
}
.paper .row.address textarea {
  height: 63px;
  padding-top: 1px;
}
.contact {
  display: flex;
  gap: 16px;
  height: 122px;
  padding-top: 9px;
  border-bottom: 2px solid #000;
}
.notes {
  flex: 1;
}
.notes label {
  display: block;
  height: 17px;
  padding: 2px 1px 0;
}
.paper .notes textarea {
  display: block;
  width: 100%;
  height: 90px;
  padding: 1px 0;
  color: #111;
}
.consent {
  height: 84px;
  padding-top: 12px;
  border-bottom: 2px solid #000;
}
.consent p {
  margin: 0 0 8px;
  padding-left: 1px;
  color: #000;
  font: 8px/10px Roboto, sans-serif;
  white-space: nowrap;
}
.signatures {
  display: flex;
  gap: 10px;
}
.sign {
  display: flex;
  flex: none;
  width: 202px;
  height: 15px;
  border-bottom: 1px solid #000;
}
.sign label {
  width: 28px;
  padding-left: 1px;
  font-weight: 700;
}
.sign.print label {
  width: 34px;
}
.paper .sign input {
  flex: 1;
  height: 12px;
  border: 0;
}
.sign.date {
  flex: 1;
  width: auto;
  min-width: 0;
}
.sign.date input {
  text-align: right;
}
.parts {
  height: 39px;
  padding: 6px 1px 0;
  border-bottom: 2px solid #000;
}
.issues table {
  width: 100%;
  table-layout: fixed;
  border-collapse: collapse;
}
.issues th {
  height: 37px;
  padding: 6px 1px 0;
  font-size: 10px;
  text-align: left;
  vertical-align: top;
}
.issues td {
  padding: 0;
  vertical-align: top;
}
.c-no {
  width: 28px;
}
.c-issue {
  width: 95px;
}
.c-pos {
  width: 89px;
}
.box {
  width: 86px;
}
.box.num {
  width: 24px;
  text-align: right;
}
.box.long {
  width: 224px;
  height: 62px;
  white-space: nowrap;
}

/* status bar */
.status {
  flex: none;
  display: flex;
  justify-content: space-between;
  align-items: center;
  height: 30px;
  padding: 0 18px 1px 0;
  border-top: 1px solid #dcdcdc;
  font-size: 12px;
}
.pager, .view-tools {
  display: flex;
  align-items: center;
}
.pager {
  padding-left: 10px;
}
.pager button {
  width: 28px;
  height: 22px;
}
.status svg {
  stroke: #b4b4b4;
}
.status .fill {
  stroke: none;
}
.status .dark, .view-tools .on svg {
  stroke: #333;
}
.pick {
  position: relative;
  height: 22px;
  border: 1px solid #dcdcdc;
}
.pick select {
  appearance: none;
  width: 100%;
  height: 20px;
  padding-left: 4px;
}
.pick svg {
  position: absolute;
  right: 4px;
  top: 9px;
}
.pick.page {
  width: 115px;
  margin: 0 1px 0 2px;
}
.pick.zoom {
  width: 80px;
  margin-right: 3px;
}
.view-tools button {
  width: 24px;
  height: 22px;
  margin-right: 4px;
  border-radius: 4px;
}
.view-tools .on {
  background: #e1e1e1;
}
.view-tools .step {
  width: 10px;
  margin: 0;
}
.view-tools button:last-child {
  margin-right: 2px;
}
.view-tools input {
  appearance: none;
  width: 112px;
  height: 12px;
  margin: 0 2px;
  background: linear-gradient(#c4c4c4, #c4c4c4) center / 100% 2px no-repeat;
}
.view-tools input::-webkit-slider-thumb {
  appearance: none;
  width: 11px;
  height: 11px;
  border: 1px solid #666;
  border-radius: 50%;
  background: #fff;
}

/* taskbar */
.taskbar {
  flex: none;
  display: flex;
  height: 40px;
  background: linear-gradient(90deg, #21363f, #22353f 60%, #1b2a45 80%, #1a2643);
  color: #fff;
}
.start {
  width: 48px;
}
.search {
  display: flex;
  align-items: center;
  width: 288px;
  padding-left: 11px;
  border: 1px solid #bbb;
  border-right: 0;
  background: #f1f1f1;
}
.search input {
  flex: 1;
  margin-left: 10px;
  font-size: 14px;
}
.search input::placeholder {
  color: #333;
}
.apps {
  display: flex;
}
.apps button {
  position: relative;
  width: 49px;
}
.apps .task-view {
  width: 50px;
  padding-right: 3px;
}
.running::after {
  content: "";
  position: absolute;
  left: 4px;
  right: 4px;
  bottom: 0;
  height: 2px;
  background: #76b9ed;
}
.apps .focused {
  background: #4f5f69;
}
.focused::after {
  left: 0;
  right: 0;
}
.letter {
  fill: #fff;
  stroke: none;
  font: 700 12px "Open Sans", sans-serif;
  text-anchor: middle;
}
.tray {
  display: flex;
  margin-left: auto;
}
.tray button {
  width: 24px;
}
.tray .news {
  width: 30px;
  margin-right: 16px;
}
.clock {
  display: flex;
  flex-direction: column;
  align-items: center;
  justify-content: center;
  width: 74px;
  line-height: 18px;
}
.tray .alerts {
  position: relative;
  width: 45px;
  padding-right: 9px;
}
.badge {
  position: absolute;
  right: 11px;
  bottom: 4px;
  width: 20px;
  height: 17px;
  border: 1px solid #888;
  border-radius: 9px;
  background: #2c3036;
  font-size: 12px;
  line-height: 15px;
}
.peek {
  width: 5px;
  border-left: 1px solid #6b7585;
}
```
